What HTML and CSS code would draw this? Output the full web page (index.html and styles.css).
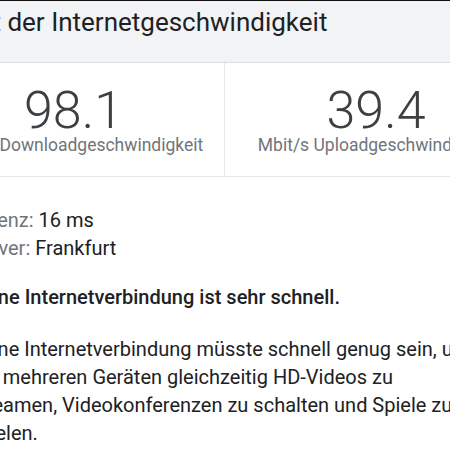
FILE: index.html
```html
<!DOCTYPE html>
<html lang="de">
<head>
<meta charset="utf-8">
<title>Test der Internetgeschwindigkeit</title>
<link rel="stylesheet" href="styles.css">
</head>
<body>
<div class="viewport">
  <div class="sheet">
    <header class="header">
      <h1 class="title">Test der Internetgeschwindigkeit</h1>
    </header>
    <section class="stats">
      <div class="stat stat-left">
        <div class="stat-value">98.1</div>
        <div class="stat-label">Mbit/s Downloadgeschwindigkeit</div>
      </div>
      <div class="stat">
        <div class="stat-value">39.4</div>
        <div class="stat-label">Mbit/s Uploadgeschwindigkeit</div>
      </div>
    </section>
    <section class="details">
      <div class="row"><span class="key">Latenz:</span> 16 ms</div>
      <div class="row"><span class="key">Server:</span> Frankfurt</div>
      <p class="verdict">Deine Internetverbindung ist sehr schnell.</p>
      <p class="desc">Deine Internetverbindung müsste schnell genug sein, um auf mehreren Geräten gleichzeitig HD-Videos zu streamen, Videokonferenzen zu schalten und Spiele zu spielen.</p>
    </section>
  </div>
</div>
</body>
</html>
```
FILE: styles.css
```css
html, body {
  margin: 0;
  padding: 0;
  overflow: hidden;
  background: #ffffff;
}

body {
  font-family: Roboto, "Noto Sans", "Liberation Sans", sans-serif;
  color: #202124;
}

.viewport {
  width: 450px;
  height: 450px;
  overflow: hidden;
}

.sheet {
  width: 604px;
  margin-left: -77px;
}

.header {
  background: #f1f3f4;
  border-top: 1px solid #111111;
  border-bottom: 1px solid #dadce0;
  padding: 6px 0 25px 28px;
}

.title {
  margin: 0;
  font-size: 26px;
  line-height: 30px;
  font-weight: 400;
  color: #202124;
  white-space: nowrap;
}

.stats {
  display: grid;
  grid-template-columns: 302px 302px;
  border-bottom: 1px solid #e4e6e8;
}

.stat {
  padding: 24px 0 21px;
  text-align: center;
  white-space: nowrap;
}

.stat-left {
  border-right: 1px solid #e4e6e8;
}

.stat-right {
  padding-right: 2px;
}

.stat-value {
  font-size: 52px;
  font-weight: 300;
  line-height: 48px;
  color: #3c4043;
}

.stat-label {
  font-size: 17.5px;
  line-height: 20px;
  color: #70757a;
}

.details {
  padding: 29px 0 0 46px;
  width: 505px;
  font-size: 20px;
  line-height: 28px;
}

.row {
  white-space: nowrap;
  color: #202124;
}

.key {
  color: #70757a;
}

.verdict {
  margin: 21px 0 0;
  font-weight: 500;
  color: #202124;
}

.desc {
  margin: 24px 0 0;
  color: #202124;
}
```
